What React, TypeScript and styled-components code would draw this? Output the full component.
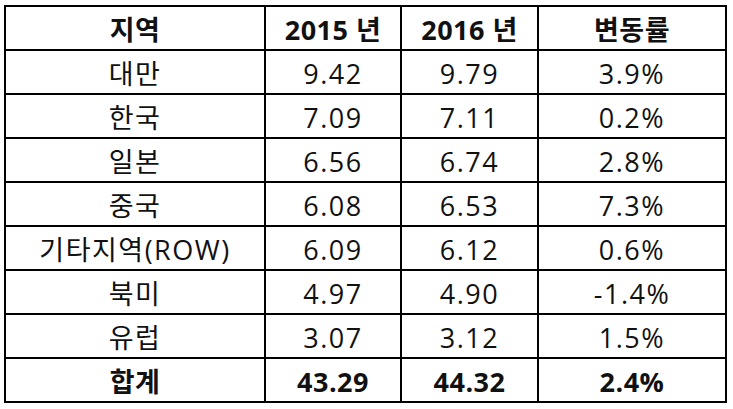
import React from 'react';
import styled, { createGlobalStyle } from 'styled-components';

type RowType = {
  region: string,
  y2015: string,
  y2016: string,
  change: string
}

const rows: RowType[] = [
  { region: '대만', y2015: '9.42', y2016: '9.79', change: '3.9%' },
  { region: '한국', y2015: '7.09', y2016: '7.11', change: '0.2%' },
  { region: '일본', y2015: '6.56', y2016: '6.74', change: '2.8%' },
  { region: '중국', y2015: '6.08', y2016: '6.53', change: '7.3%' },
  { region: '기타지역(ROW)', y2015: '6.09', y2016: '6.12', change: '0.6%' },
  { region: '북미', y2015: '4.97', y2016: '4.90', change: '-1.4%' },
  { region: '유럽', y2015: '3.07', y2016: '3.12', change: '1.5%' },
];

const total: RowType = { region: '합계', y2015: '43.29', y2016: '44.32', change: '2.4%' };

const GlobalStyle = createGlobalStyle`
  body {
    margin: 0;
    background: #fff;
    font-family: "Open Sans", "Noto Sans CJK KR", sans-serif;
    color: #111;
  }
`

export default function App() {
  return (
    <>
      <GlobalStyle />
      <Page>
        <Table>
          <colgroup>
            <col style={{ width: 260 }} />
            <col style={{ width: 136 }} />
            <col style={{ width: 137 }} />
            <col style={{ width: 188 }} />
          </colgroup>
          <thead>
            <tr>
              <Cell as="th" bold>지역</Cell>
              <Cell as="th" bold>2015 년</Cell>
              <Cell as="th" bold>2016 년</Cell>
              <Cell as="th" bold>변동률</Cell>
            </tr>
          </thead>
          <tbody>
            {rows.map(row => (
              <tr key={row.region}>
                <Cell>{row.region}</Cell>
                <Cell>{row.y2015}</Cell>
                <Cell>{row.y2016}</Cell>
                <Cell>{row.change}</Cell>
              </tr>
            ))}
            <tr>
              <Cell bold>{total.region}</Cell>
              <Cell bold>{total.y2015}</Cell>
              <Cell bold>{total.y2016}</Cell>
              <Cell bold>{total.change}</Cell>
            </tr>
          </tbody>
        </Table>
      </Page>
    </>
  )
}

const Page = styled.div`
  padding: 5px 0 0 4px;
`
const Table = styled.table`
  border-collapse: collapse;
  table-layout: fixed;
  width: 721px;
`
const Cell = styled.td<{ bold?: boolean }>`
  border: 2px solid #000;
  height: 44px;
  padding: 2px 0 0;
  box-sizing: border-box;
  text-align: center;
  vertical-align: middle;
  font-size: 27px;
  line-height: 1;
  letter-spacing: ${props => props.bold ? '0.5px' : '1.5px'};
  font-weight: ${props => props.bold ? 700 : 400};
  white-space: nowrap;
`
